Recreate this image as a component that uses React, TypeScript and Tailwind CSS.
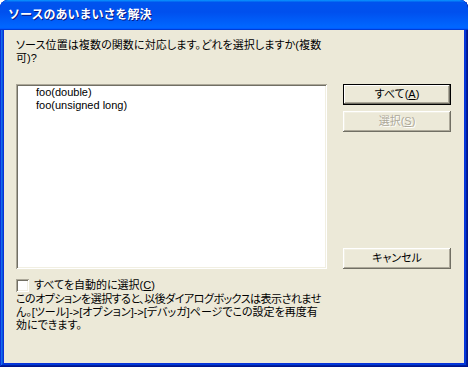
import React from "react";

const font = "font-['Liberation_Sans','Noto_Sans_CJK_JP',sans-serif]";

function Btn({
  children,
  isDefault,
  disabled,
  className = "",
}: {
  children: React.ReactNode;
  isDefault?: boolean;
  disabled?: boolean;
  className?: string;
}) {
  const base =
    "w-[108px] h-[21px] flex items-center justify-center text-[11px] leading-[13px] bg-[#ECE9D8] [font-feature-settings:'palt']";
  if (isDefault) {
    return (
      <div className={`${base} border border-black shadow-[inset_-1px_-1px_#716F64,inset_1px_1px_#fff,inset_-2px_-2px_#ACA899] text-black ${className}`}>
        {children}
      </div>
    );
  }
  return (
    <div
      className={`${base} shadow-[inset_-1px_-1px_#716F64,inset_1px_1px_#fff,inset_-2px_-2px_#ACA899,inset_2px_2px_#F1EFE2] ${
        disabled ? "text-[#ACA899] [text-shadow:1px_1px_#fff]" : "text-black"
      } ${className}`}
    >
      {children}
    </div>
  );
}

export default function App() {
  return (
    <div className={`${font} w-[468px] h-[367px] flex flex-col rounded-t-[8px] overflow-hidden bg-[#0831d9] shadow-[inset_-1px_-1px_#00138c,inset_1px_1px_#0831d9,inset_-2px_-2px_#001ea0,inset_2px_2px_#166aee,inset_-3px_-3px_#003bda,inset_3px_3px_#0855dd]`}>
      <div className="h-[30px] shrink-0 flex items-center pl-[8px] rounded-t-[8px] bg-[linear-gradient(180deg,#0997ff,#0053ee_8%,#0050ee_40%,#0066ff_88%,#0066ff_93%,#005bff_95%,#003dd7_96%,#003dd7)]">
        <span className="text-white font-bold text-[12px] leading-[15px] [text-shadow:1px_1px_#0a1883] mt-[1px]">
          ソースのあいまいさを解決
        </span>
      </div>
      <div className="flex-1 mx-[4px] mb-[4px] bg-[#ECE9D8] flex flex-col pl-[12px] pr-[12px] pt-[9px] text-black">
        <div className="text-[11px] leading-[13px] whitespace-nowrap [font-feature-settings:'palt'] tracking-[0.1px]">
          <div>ソース位置は複数の関数に対応します。どれを選択しますか(複数</div>
          <div>可)?</div>
        </div>
        <div className="mt-[19px] flex gap-[16px] h-[185px]">
          <div className="w-[311px] h-full bg-white shadow-[inset_1px_1px_#ACA899,inset_-1px_-1px_#fff,inset_2px_2px_#716F64,inset_-2px_-2px_#F1EFE2] pt-[2px] pl-[20px] text-[11px] leading-[13px]">
            <div>foo(double)</div>
            <div>foo(unsigned long)</div>
          </div>
          <div className="w-[108px] flex flex-col gap-[6px]">
            <Btn isDefault>
              すべて(<span className="underline">A</span>)
            </Btn>
            <Btn disabled>
              選択(<span className="underline">S</span>)
            </Btn>
            <Btn className="mt-auto">キャンセル</Btn>
          </div>
        </div>
        <div className="mt-[10px] flex items-center gap-[5px] h-[13px]">
          <div className="w-[13px] h-[13px] shrink-0 bg-white shadow-[inset_1px_1px_#ACA899,inset_-1px_-1px_#fff,inset_2px_2px_#716F64,inset_-2px_-2px_#F1EFE2]" />
          <span className="text-[11px] leading-[13px] [font-feature-settings:'palt']">
            すべてを自動的に選択(<span className="underline">C</span>)
          </span>
        </div>
        <div className="mt-[1px] text-[11px] leading-[13px] whitespace-nowrap [font-feature-settings:'palt']">
          <div className="tracking-[-0.5px]">このオプションを選択すると、以後ダイアログボックスは表示されませ</div>
          <div>ん。[ツール]-&gt;[オプション]-&gt;[デバッガ]ページでこの設定を再度有</div>
          <div>効にできます。</div>
        </div>
      </div>
    </div>
  );
}
